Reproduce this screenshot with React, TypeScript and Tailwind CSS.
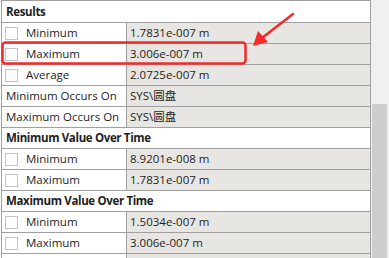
import React from "react";

type Row =
  | { kind: "header"; text: string }
  | { kind: "check"; label: string; value: string }
  | { kind: "plain"; label: string; value: string };

const rows: Row[] = [
  { kind: "header", text: "Results" },
  { kind: "check", label: "Minimum", value: "1.7831e-007 m" },
  { kind: "check", label: "Maximum", value: "3.006e-007 m" },
  { kind: "check", label: "Average", value: "2.0725e-007 m" },
  { kind: "plain", label: "Minimum Occurs On", value: "SYS\\圆盘" },
  { kind: "plain", label: "Maximum Occurs On", value: "SYS\\圆盘" },
  { kind: "header", text: "Minimum Value Over Time" },
  { kind: "check", label: "Minimum", value: "8.9201e-008 m" },
  { kind: "check", label: "Maximum", value: "1.7831e-007 m" },
  { kind: "header", text: "Maximum Value Over Time" },
  { kind: "check", label: "Minimum", value: "1.5034e-007 m" },
  { kind: "check", label: "Maximum", value: "3.006e-007 m" },
  { kind: "plain", label: "", value: "" },
];

const App = () => {
  return (
    <div
      className="relative flex h-[258px] w-[389px] overflow-hidden bg-white text-[11.5px] text-[#1e1e1e]"
      style={{ fontFamily: '"Open Sans", "Noto Sans CJK SC", sans-serif' }}
    >
      {/* property grid */}
      <div className="ml-px w-[370px] shrink-0 border-x border-t border-[#a0a0a0]">
        {rows.map((row, i) =>
          row.kind === "header" ? (
            <div
              key={i}
              className={`flex items-center border-b border-[#a0a0a0] bg-white pl-[4px] font-bold tracking-[-0.35px] ${
                i === 0 ? "h-[22px]" : "h-[21px]"
              }`}
            >
              {row.text}
            </div>
          ) : (
            <div key={i} className="flex h-[21px] border-b border-[#a0a0a0]">
              <div className="flex w-[125px] shrink-0 items-center border-r border-[#a0a0a0] bg-white">
                {row.kind === "check" ? (
                  <>
                    <span className="ml-[3px] h-[13px] w-[13px] border border-[#c4c4c4] bg-white" />
                    <span className="ml-[8px]">{row.label}</span>
                  </>
                ) : (
                  <span className="ml-[4px]">{row.label}</span>
                )}
              </div>
              <div className="flex flex-1 items-center bg-[#e7e6e2] pl-[3px]">
                {row.value}
              </div>
            </div>
          )
        )}
      </div>

      {/* scrollbar */}
      <div className="flex w-[18px] shrink-0 flex-col bg-[#f0f0f0] pt-[104px]">
        <div className="ml-px h-full w-[15px] bg-[#cdcdcd]" />
      </div>

      {/* annotation overlay */}
      <svg
        className="pointer-events-none absolute left-0 top-0"
        width="389"
        height="258"
        viewBox="0 0 389 258"
      >
        <rect
          x="2.5"
          y="42.5"
          width="243"
          height="21"
          rx="3"
          fill="none"
          stroke="#f52a2a"
          strokeWidth="2.5"
        />
        <path d="M293 14 L262 38" stroke="#f52a2a" strokeWidth="2.5" strokeLinecap="round" />
        <path d="M253 46 L258 31 L268 42 Z" fill="#f52a2a" />
      </svg>
    </div>
  );
};

export default App;
